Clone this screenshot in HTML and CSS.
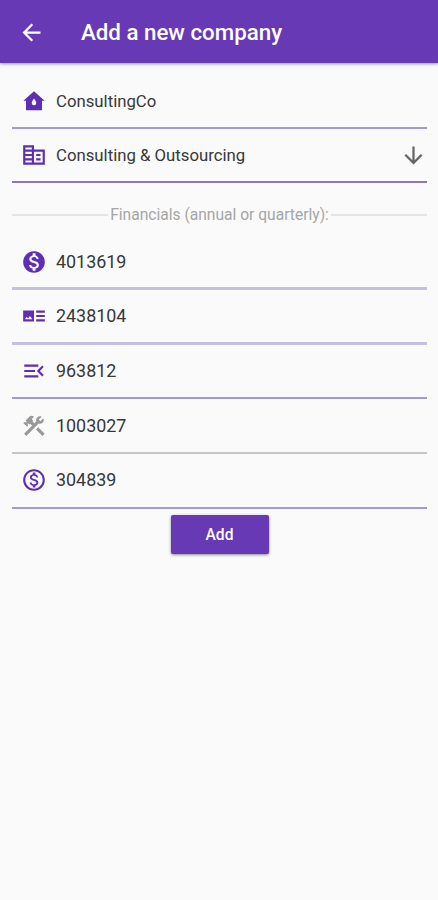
FILE: index.html
```html
<!DOCTYPE html>
<html lang="en">
<head>
<meta charset="utf-8">
<title>Add a new company</title>
<link rel="stylesheet" href="styles.css">
</head>
<body>
<header class="bar">
  <svg class="icon" viewBox="0 0 24 24"><path d="M20 11H7.83l5.59-5.59L12 4l-8 8 8 8 1.41-1.41L7.83 13H20v-2z"/></svg>
  <h1 class="title">Add a new company</h1>
</header>
<main class="form">
  <div class="field name">
    <svg class="icon" viewBox="0 0 24 24"><path fill-rule="evenodd" d="M12 3 2.200 11.800h2.400V20.500h14.800v-8.700h2.400zM12 9.800c1.200 1.600 2.100 2.900 2.100 4.100a2.100 2.100 0 0 1-4.200 0c0-1.200.9-2.500 2.100-4.100z"/></svg>
    <span class="value">ConsultingCo</span>
  </div>
  <div class="field industry">
    <svg class="icon" viewBox="0 0 24 24"><path d="M12 7V3H2v18h20V7H12zm-2 12H4v-2h6v2zm0-4H4v-2h6v2zm0-4H4V9h6v2zm0-4H4V5h6v2zm10 12h-8V9h8v10zm-2-8h-4v2h4v-2zm0 4h-4v2h4v-2z"/></svg>
    <span class="value">Consulting &amp; Outsourcing</span>
    <svg class="icon arrow" viewBox="0 0 24 24"><path d="M20 12l-1.410-1.410L13 16.170V4h-2v12.170l-5.580-5.590L4 12l8 8 8-8z"/></svg>
  </div>
  <div class="divider"><span class="caption">Financials (annual or quarterly):</span></div>
  <div class="field number thick">
    <svg class="icon" viewBox="0 0 24 24"><path d="M12 2C6.480 2 2 6.480 2 12s4.480 10 10 10 10-4.480 10-10S17.520 2 12 2zm1.410 16.090V20h-2.670v-1.930c-1.710-.36-3.160-1.460-3.270-3.400h1.960c.1 1.050.82 1.870 2.650 1.870 1.960 0 2.400-.98 2.400-1.590 0-.83-.44-1.610-2.670-2.140-2.480-.6-4.180-1.620-4.180-3.670 0-1.720 1.390-2.840 3.110-3.210V4h2.670v1.950c1.860.45 2.790 1.860 2.850 3.390H14.300c-.05-1.110-.64-1.870-2.220-1.870-1.500 0-2.400.68-2.400 1.640 0 .84.65 1.390 2.670 1.910s4.180 1.390 4.180 3.910c-.01 1.830-1.380 2.830-3.120 3.160z"/></svg>
    <span class="value">4013619</span>
  </div>
  <div class="field number thick">
    <svg class="icon" viewBox="0 0 24 24"><path d="M22 13h-8v-2h8v2zm0-6h-8v2h8V7zm-8 10h8v-2h-8v2zM12 7v10H2V7zm-1.500 8l-2.250-3-1.750 2.260-1.250-1.510L3.500 15h7z"/></svg>
    <span class="value">2438104</span>
  </div>
  <div class="field number">
    <svg class="icon" viewBox="0 0 24 24"><path d="M3 18h13v-2H3v2zm0-5h10v-2H3v2zm0-7v2h13V6H3zm18 9.590L17.420 12 21 8.410 19.590 7l-5 5 5 5L21 15.590z"/></svg>
    <span class="value">963812</span>
  </div>
  <div class="field number muted">
    <svg class="icon" viewBox="0 0 24 24"><path d="M13.783 15.172l2.121-2.121 5.996 5.996-2.121 2.121zM17.500 10c1.930 0 3.500-1.570 3.500-3.500 0-.58-.16-1.120-.41-1.600l-2.700 2.700-1.490-1.490 2.700-2.700c-.48-.25-1.020-.41-1.600-.41C15.570 3 14 4.570 14 6.500c0 .41.08.8.21 1.160l-1.850 1.850-1.780-1.780.71-.71-1.410-1.410L12 3.490c-1.170-1.170-3.070-1.170-4.240 0L4.220 7.030l1.410 1.410H2.810l-.71.71 3.540 3.540.71-.71V9.150l1.410 1.410.71-.71 1.780 1.780-7.410 7.410 2.120 2.120L16.340 9.790c.36.13.75.21 1.160.21z"/></svg>
    <span class="value">1003027</span>
  </div>
  <div class="field number">
    <svg class="icon" viewBox="0 0 24 24"><path d="M12 2C6.480 2 2 6.480 2 12s4.480 10 10 10 10-4.480 10-10S17.520 2 12 2zm0 18c-4.410 0-8-3.590-8-8s3.590-8 8-8 8 3.590 8 8-3.590 8-8 8zm.31-8.860c-1.770-.45-2.340-.94-2.340-1.670 0-.84.79-1.430 2.100-1.430 1.380 0 1.900.66 1.940 1.640h1.710c-.05-1.340-.87-2.570-2.490-2.970V5H10.900v1.690c-1.510.32-2.720 1.300-2.720 2.810 0 1.790 1.490 2.690 3.660 3.210 1.950.46 2.340 1.150 2.340 1.870 0 .53-.39 1.390-2.100 1.390-1.600 0-2.230-.72-2.320-1.640H8.040c.1 1.700 1.360 2.660 2.860 2.970V19h2.340v-1.670c1.520-.29 2.720-1.160 2.730-2.770-.01-2.200-1.900-2.960-3.660-3.420z"/></svg>
    <span class="value">304839</span>
  </div>
  <button class="add" type="button">Add</button>
</main>
</body>
</html>
```
FILE: styles.css
```css
* {
  box-sizing: border-box;
}

body {
  margin: 0;
  min-height: 900px;
  background: #fafafa;
  color: #383838;
  font-family: Roboto, sans-serif;
}

.icon {
  width: 26px;
  height: 26px;
  flex: none;
  fill: #5e2eb5;
}

.bar {
  display: flex;
  align-items: center;
  gap: 36px;
  height: 63px;
  padding: 1px 18px 0;
  background: #6739b5;
  box-shadow: 0 1px 3px rgba(0, 0, 0, 0.4);
}

.bar .icon {
  width: 27px;
  height: 27px;
  fill: #fff;
}

.title {
  margin: 0;
  color: #fff;
  font-size: 22.3px;
  font-weight: 500;
  line-height: 28px;
}

.form {
  display: flex;
  flex-direction: column;
  padding: 11px 11px 0 12px;
}

.field {
  display: flex;
  align-items: center;
  gap: 9px;
  height: 54.7px;
  padding: 0 0 0 9px;
  border-bottom: 2px solid #a399d3;
}

.name {
  padding-top: 1px;
}

.industry {
  border-color: #9474b8;
}

.thick {
  padding-top: 1px;
  border-bottom-color: #c5bfe1;
  border-bottom-width: 3px;
}

.muted {
  border-color: #c6c6c6;
}

.muted .icon {
  fill: #999;
}

.value {
  flex: 1;
  font-size: 16.75px;
  line-height: 24px;
}

.number .value {
  font-size: 17.9px;
}

.field .arrow {
  width: 27px;
  height: 27px;
  fill: #666;
}

.divider {
  display: flex;
  align-items: center;
  gap: 2px;
  height: 52px;
  padding-top: 11px;
}

.divider::before,
.divider::after {
  content: "";
  flex: 1;
  height: 2px;
  background: #e4e4e4;
}

.caption {
  color: #a6a6a6;
  font-size: 15.6px;
  line-height: 20px;
}

.add {
  align-self: center;
  width: 98px;
  height: 39px;
  margin-top: 6.4px;
  padding: 0;
  border: 0;
  border-radius: 2px;
  background: #6739b5;
  box-shadow: 0 1px 3px rgba(0, 0, 0, 0.45);
  color: #fff;
  font: 500 15.6px/40px Roboto, sans-serif;
}
```
